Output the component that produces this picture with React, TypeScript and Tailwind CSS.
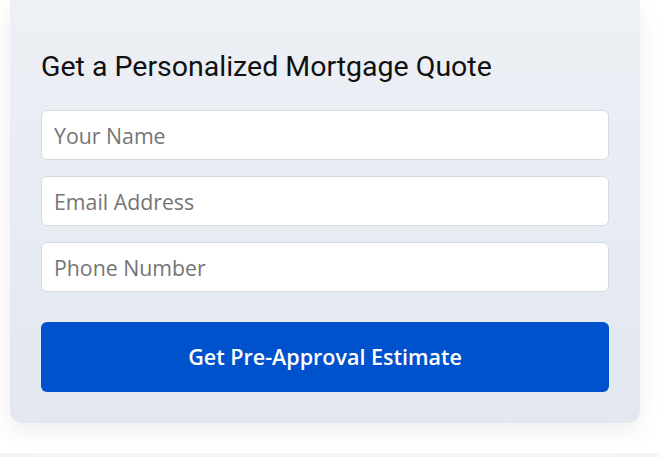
import { useState } from 'react';

const FIELDS = [
  { id: 'name', type: 'text', placeholder: 'Your Name' },
  { id: 'email', type: 'email', placeholder: 'Email Address' },
  { id: 'phone', type: 'tel', placeholder: 'Phone Number' },
];

export default function App() {
  const [values, setValues] = useState<Record<string, string>>({});

  return (
    <div className="min-h-screen bg-white flex flex-col">
      <div className="h-[453px] pl-[10px] pr-[20px]">
        <form
          className="w-[630px] rounded-b-xl bg-gradient-to-b from-[#edf0f5] to-[#e2e7f0] pt-[50px] pb-[31px] px-[31px] shadow-[0_8px_24px_rgba(0,0,0,0.07)]"
          onSubmit={(e) => e.preventDefault()}
        >
          <h2 className="font-['Roboto',sans-serif] text-[28.5px] leading-[34px] text-[#111] mb-[26px]">
            Get a Personalized Mortgage Quote
          </h2>
          <div className="flex flex-col gap-[16px]">
            {FIELDS.map((f) => (
              <input
                key={f.id}
                type={f.type}
                placeholder={f.placeholder}
                value={values[f.id] || ''}
                onChange={(e) => setValues({ ...values, [f.id]: e.target.value })}
                className="w-[568px] h-[50px] rounded-md border border-[#d6dae1] bg-white px-[12px] font-['Open_Sans',sans-serif] text-[21.3px] text-[#333] placeholder:text-[#757575] outline-none"
              />
            ))}
          </div>
          <button
            type="submit"
            className="mt-[30px] w-[568px] h-[70px] rounded-md bg-[#0052cc] text-white font-['Open_Sans',sans-serif] font-semibold text-[21.5px]"
          >
            Get Pre-Approval Estimate
          </button>
        </form>
      </div>
      <div className="flex-1 bg-[#f3f4f6]" />
    </div>
  );
}
